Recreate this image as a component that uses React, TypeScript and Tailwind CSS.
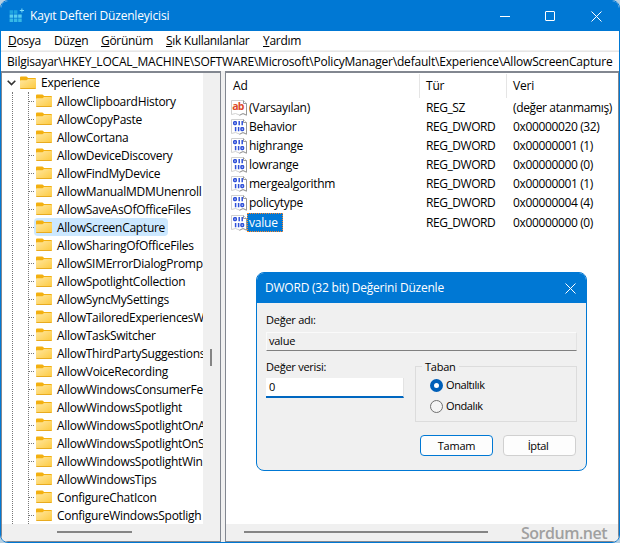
import { useState } from "react";

type TreeKey = { name: string };

const KEYS: TreeKey[] = [
  { name: "AllowClipboardHistory" },
  { name: "AllowCopyPaste" },
  { name: "AllowCortana" },
  { name: "AllowDeviceDiscovery" },
  { name: "AllowFindMyDevice" },
  { name: "AllowManualMDMUnenroll" },
  { name: "AllowSaveAsOfOfficeFiles" },
  { name: "AllowScreenCapture" },
  { name: "AllowSharingOfOfficeFiles" },
  { name: "AllowSIMErrorDialogPromp" },
  { name: "AllowSpotlightCollection" },
  { name: "AllowSyncMySettings" },
  { name: "AllowTailoredExperiencesW" },
  { name: "AllowTaskSwitcher" },
  { name: "AllowThirdPartySuggestions" },
  { name: "AllowVoiceRecording" },
  { name: "AllowWindowsConsumerFe" },
  { name: "AllowWindowsSpotlight" },
  { name: "AllowWindowsSpotlightOnA" },
  { name: "AllowWindowsSpotlightOnS" },
  { name: "AllowWindowsSpotlightWin" },
  { name: "AllowWindowsTips" },
  { name: "ConfigureChatIcon" },
  { name: "ConfigureWindowsSpotligh" },
];

const VALUES = [
  { name: "(Varsayılan)", type: "REG_SZ", data: "(değer atanmamış)" },
  { name: "Behavior", type: "REG_DWORD", data: "0x00000020 (32)" },
  { name: "highrange", type: "REG_DWORD", data: "0x00000001 (1)" },
  { name: "lowrange", type: "REG_DWORD", data: "0x00000000 (0)" },
  { name: "mergealgorithm", type: "REG_DWORD", data: "0x00000001 (1)" },
  { name: "policytype", type: "REG_DWORD", data: "0x00000004 (4)" },
  { name: "value", type: "REG_DWORD", data: "0x00000000 (0)" },
];

function FolderIcon() {
  return (
    <svg width="16" height="14" viewBox="0 0 16 14" className="shrink-0">
      <defs>
        <linearGradient id="folder" x1="0" y1="0" x2="1" y2="1">
          <stop offset="0" stopColor="#ffe7a0" />
          <stop offset="1" stopColor="#fdca40" />
        </linearGradient>
      </defs>
      <path d="M0 1.6Q0 .6 1 .6H6Q7 .6 8 2H15Q16 2 16 3V8H0Z" fill="#f3b010" />
      <path d="M0 5Q0 4.2 .8 4.2H6.5L8 3H15.3Q16 3 16 3.8V12Q16 12.8 15.2 12.8H.8Q0 12.8 0 12Z" fill="url(#folder)" />
      <path d="M.3 12.5H15.7" stroke="#e8ab20" />
    </svg>
  );
}

function ValueIcon({ text }: { text: boolean }) {
  return (
    <svg width="16" height="16" viewBox="0 0 16 16" className="shrink-0">
      <path d="M.5 .5H12.5L15.5 3.5V15L12 13.5 8.5 15 4.5 13.5 .5 14.5Z" fill="#fff" stroke="#d0d0d0" />
      <path d="M12.5 .5V3.5H15.5V15.2L12 13.6 8.5 15.3" fill="none" stroke="#999" />
      {text ? (
        <text x="1.2" y="10" fontSize="10.5" fontWeight="700" fill="#dc4a28" fontFamily="Open Sans, sans-serif" textLength="12">
          ab
        </text>
      ) : (
        <g fill="none" stroke="#2f50d8" strokeWidth="1.5">
          <rect x="2.75" y="2.75" width="2.5" height="2.7" rx=".7" />
          <path d="M8.2 2V6.2M11.2 2V6.2M4.6 8V12.2M7.6 8V12.2" />
          <rect x="10" y="8.75" width="2.5" height="2.7" rx=".7" />
        </g>
      )}
    </svg>
  );
}

function RegeditIcon() {
  return (
    <svg width="16" height="16" viewBox="0 0 16 16">
      <path d="M.6 2.2H4.1V5.7H.6ZM4.9 2.2H8.4V5.7H4.9Z" fill="#1fa4e0" />
      <path d="M.6 6.5H4.1V9.8H.6ZM4.9 6.5H8.4V9.8H4.9ZM9.2 6.5H12.7V9.8H9.2Z" fill="#58cdf0" />
      <path d="M.6 10.6H4.1V14H.6ZM4.9 10.6H8.4V14H4.9ZM9.2 10.6H12.7V14H9.2Z" fill="#35b8e6" />
      <path d="M12.4 .4H13.4V1.9H15V2.9H13.4V4.4H12.4V2.9H10.8V1.9H12.4Z" fill="#7fdcf7" />
    </svg>
  );
}

function CloseIcon() {
  return (
    <svg width="11" height="11" viewBox="0 0 11 11" stroke="#fff" fill="none">
      <path d="M.5 .5L10.5 10.5M10.5 .5L.5 10.5" />
    </svg>
  );
}

function EditDialog() {
  const [base, setBase] = useState("hex");
  const radios = [
    { id: "hex", label: "Onaltılık" },
    { id: "dec", label: "Ondalık" },
  ];

  return (
    <div className="absolute left-[255px] top-[271px] flex h-[199px] w-[331px] flex-col overflow-hidden rounded-lg border border-[#0078d4] bg-[#f0f0f0] text-[11px] tracking-[-0.25px]">
      <div className="flex h-[30px] shrink-0 items-center justify-between bg-[#0078d4] pl-2 pr-[10px] text-white">
        <span className="text-xs tracking-[-0.22px]">DWORD (32 bit) Değerini Düzenle</span>
        <CloseIcon />
      </div>
      <div className="flex flex-col px-[9px] pt-[9px]">
        <span className="h-4 leading-4">Değer adı:</span>
        <div className="mt-1 flex h-[19px] w-[311px] items-center border border-b-[#808080] border-l-[#fafafa] border-r-[#e3e3e3] border-t-[#fafafa] pl-[2px]">
          value
        </div>
        <div className="mt-[7px] flex justify-between">
          <div className="w-[138px]">
            <div className="h-4 pt-px leading-4">Değer verisi:</div>
            <div className="mt-1 flex h-5 items-center border-b-2 border-r border-b-[#0067c0] border-r-[#e3e3e3] bg-white pl-[3px]">
              0
            </div>
          </div>
          <fieldset className="h-[64px] w-[162px] border border-[#dcdcdc] pl-[14px]">
            <legend className="ml-[-8px] h-4 px-[3px] pt-px leading-4">Taban</legend>
            <div className="pt-px">
              {radios.map((r) => (
                <label key={r.id} className="flex h-[21px] items-center gap-[3px] tracking-[-0.4px]">
                  <input type="radio" className="sr-only" checked={base === r.id} onChange={() => setBase(r.id)} />
                  <span
                    className={
                      base === r.id
                        ? "size-[13px] rounded-full border-4 border-[#005fb8] bg-white"
                        : "size-[13px] rounded-full border border-[#707070] bg-[#f4f4f4]"
                    }
                  />
                  {r.label}
                </label>
              ))}
            </div>
          </fieldset>
        </div>
        <div className="mt-[13px] flex justify-end gap-[10px] pr-[1px]">
          <button className="h-[21px] w-[73px] rounded border border-[#0078d4] bg-[#fdfdfd] leading-[20px]">Tamam</button>
          <button className="h-[21px] w-[73px] rounded border border-[#d0d0d0] bg-[#fdfdfd] pr-[3px] leading-[20px] tracking-[-0.4px]">İptal</button>
        </div>
      </div>
    </div>
  );
}

export default function App() {
  const [selected] = useState("AllowScreenCapture");

  return (
    <div className="h-[543px] w-[620px] bg-[#b5cfe2]">
      <div className="relative flex h-[543px] w-[620px] flex-col overflow-hidden rounded-lg border border-[#0078d4] bg-white font-['Open_Sans',sans-serif] text-xs tracking-[-0.2px] text-black">
        <header className="flex h-[30px] shrink-0 items-center bg-[#0078d4] pl-2 text-white">
          <RegeditIcon />
          <span className="ml-[5px] flex-1 tracking-[-0.18px]">Kayıt Defteri Düzenleyicisi</span>
          <svg width="10" height="10" viewBox="0 0 10 10" stroke="#fff">
            <path d="M0 5.5H10" />
          </svg>
          <svg width="10" height="10" viewBox="0 0 10 10" stroke="#fff" fill="none" className="ml-[35px] mr-[36px]">
            <rect x=".5" y=".5" width="9" height="9" rx=".5" />
          </svg>
          <CloseIcon />
          <span className="w-[17px]" />
        </header>

        <nav className="flex h-[20px] shrink-0 items-center border-b border-[#f0f0f0] pl-[7px] pt-px tracking-[-0.3px]">
          <span className="w-[46px]"><u>D</u>osya</span>
          <span className="w-[47px]">Düz<u>e</u>n</span>
          <span className="w-[65px]"><u>G</u>örünüm</span>
          <span className="w-[97px]"><u>S</u>ık Kullanılanlar</span>
          <span><u>Y</u>ardım</span>
        </nav>

        <div className="flex h-[20px] shrink-0 items-center whitespace-nowrap border-t border-[#e6e6e6] pl-[6px] pt-px tracking-[-0.2px]">
          Bilgisayar\HKEY_LOCAL_MACHINE\SOFTWARE\Microsoft\PolicyManager\default\Experience\AllowScreenCapture
        </div>

        <main className="flex min-h-0 flex-1 bg-[#f0f0f0]">
          <section className="flex w-[220px] flex-col border border-t-2 border-[#828790]">
            <div className="flex h-[451px]">
              <div className="w-[201px] overflow-hidden bg-white tracking-[-0.28px]">
                <div className="flex h-[19px] items-center pl-[5px] pt-px">
                  <svg width="9" height="6" viewBox="0 0 9 6" fill="none" stroke="#333" strokeWidth="1.6">
                    <path d="M.7 .8L4.5 4.6 8.3 .8" />
                  </svg>
                  <span className="w-[4px]" />
                  <FolderIcon />
                  <span className="ml-[5px]">Experience</span>
                </div>
                <div className="ml-[10px] border-l border-dotted border-[#777]">
                  <div className="ml-[15px] border-l border-dotted border-[#777]">
                    {KEYS.map((k) => (
                      <div key={k.name} className="flex h-[18px] items-center whitespace-nowrap">
                        <span className="w-[5px] shrink-0 border-t border-dotted border-[#777]" />
                        <span
                          className={
                            k.name === selected
                              ? "flex h-[18px] items-center gap-[5px] rounded-sm bg-[#cce8ff] pl-[2px] pr-[3px]"
                              : "flex h-[18px] items-center gap-[5px] pl-[2px]"
                          }
                        >
                          <FolderIcon />
                          <span className="pt-px leading-[17px]">{k.name}</span>
                        </span>
                      </div>
                    ))}
                  </div>
                </div>
              </div>
              <div className="flex flex-1 flex-col bg-[#f0f0f0]">
                <div className="ml-[7px] mt-[276px] h-[17px] w-[2px] bg-[#858585]" />
              </div>
            </div>
            <div className="flex-1 pt-[7px]">
              <div className="ml-[55px] h-[2px] w-[75px] bg-[#858585]" />
            </div>
          </section>

          <section className="ml-1 flex flex-1 flex-col border border-t-2 border-[#828790]">
            <div className="h-[451px] bg-white">
              <div className="flex h-[25px] items-center pt-px">
                <span className="flex h-full w-[194px] items-center border-r border-[#e5e5e5] pl-[7px]">Ad</span>
                <span className="flex h-full w-[87px] items-center border-r border-[#e5e5e5] pl-[6px]">Tür</span>
                <span className="pl-[6px]">Veri</span>
              </div>
              {VALUES.map((v) => (
                <div key={v.name} className="flex h-[19px] items-center whitespace-nowrap last:mt-px">
                  <span className="flex w-[200px] items-center pl-[5px]">
                    <ValueIcon text={v.type === "REG_SZ"} />
                    <span
                      className={
                        v.name === "value"
                          ? "h-[19px] border border-dotted border-[#ff8728] bg-[#0078d7] pl-px pr-[4px] leading-[17px] text-white"
                          : "pl-[2px] tracking-[-0.28px]"
                      }
                    >
                      {v.name}
                    </span>
                  </span>
                  <span className="w-[87px] tracking-[-0.45px]">{v.type}</span>
                  <span className="tracking-[-0.36px]">{v.data}</span>
                </div>
              ))}
            </div>
            <div className="flex flex-1 pt-[7px]">
              <div className="ml-[18px] h-[2px] w-[244px] bg-[#858585]" />
            </div>
          </section>
        </main>

        <EditDialog />
        <span className="absolute bottom-0 right-[12px] text-[16px] font-semibold leading-[18px] tracking-[-0.5px] text-[#a0a0a0]">
          Sordum.net
        </span>
      </div>
    </div>
  );
}
